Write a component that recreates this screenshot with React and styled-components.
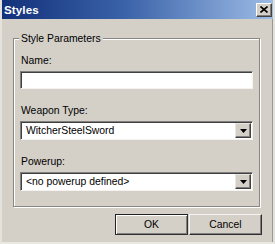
import React from "react";
import styled, { createGlobalStyle } from "styled-components";

const Global = createGlobalStyle`
  html, body { margin: 0; padding: 0; background: #d4d0c8; }
  body { font-family: "Liberation Sans", Arial, sans-serif; }
`;

const Window = styled.div`
  width: 275px;
  height: 244px;
  box-sizing: border-box;
  background: #d4d0c8;
  display: flex;
  flex-direction: column;
  border-left: 2px solid #e4e2dc;
  border-right: 2px solid #e4e2dc;
  border-bottom: 2px solid #eae8e3;
  overflow: hidden;
  font-size: 10.4px;
  color: #000;
`;

const TitleBar = styled.div`
  height: 19px;
  margin: 0 -2px;
  flex: none;
  display: flex;
  align-items: center;
  justify-content: space-between;
  padding: 0 3px 0 4px;
  background: linear-gradient(to right, #12307a 0%, #3a62a8 45%, #9ebde6 100%);
`;

const Title = styled.span`
  color: #fff;
  font-weight: bold;
  font-size: 11.6px;
  letter-spacing: 0.1px;
`;

const CloseBtn = styled.div`
  width: 16px;
  height: 14px;
  box-sizing: border-box;
  background: #d4d0c8;
  border-top: 1px solid #fff;
  border-left: 1px solid #fff;
  border-right: 1px solid #404040;
  border-bottom: 1px solid #404040;
  box-shadow: inset -1px -1px 0 #808080;
  display: flex;
  align-items: center;
  justify-content: center;
`;

const Body = styled.div`
  flex: 1;
  display: flex;
  flex-direction: column;
  padding: 19px 12px 0 11px;
  border-right: 1px solid #9a9893;
`;

const Group = styled.div`
  position: relative;
  border: 1px solid #8a8782;
  box-shadow: inset 1px 1px 0 #fff, 1px 1px 0 #fff;
  padding: 15px 6px 15px 6px;
  display: flex;
  flex-direction: column;
  gap: 15px;
`;

const Legend = styled.span`
  position: absolute;
  top: -7px;
  left: 5px;
  padding: 0 2px;
  line-height: 13px;
  background: #d4d0c8;
`;

const Field = styled.div`
  display: flex;
  flex-direction: column;
`;

const Label = styled.div`
  line-height: 13px;
  margin-bottom: 4px;
  padding-left: 1px;
`;

const Sunken = styled.div`
  height: ${(p) => p.$h}px;
  box-sizing: border-box;
  background: #fff;
  border-top: 1px solid #808080;
  border-left: 1px solid #808080;
  border-right: 1px solid #f4f3f0;
  border-bottom: 1px solid #f4f3f0;
  box-shadow: inset 1px 1px 0 #404040;
  display: flex;
  align-items: center;
  justify-content: space-between;
  padding: 1px 1px 1px 5px;
`;

const Value = styled.span`
  line-height: 13px;
`;

const ArrowBtn = styled.div`
  width: 16px;
  height: 15px;
  box-sizing: border-box;
  background: #d4d0c8;
  border-top: 1px solid #e8e6e1;
  border-left: 1px solid #e8e6e1;
  border-right: 1px solid #404040;
  border-bottom: 1px solid #404040;
  box-shadow: inset -1px -1px 0 #808080;
  display: flex;
  align-items: center;
  justify-content: center;
`;

const ButtonRow = styled.div`
  display: flex;
  justify-content: flex-end;
  gap: 1px;
  padding-top: 7px;
  margin-right: -2px;
`;

const Button = styled.div`
  width: 73px;
  height: 21px;
  box-sizing: border-box;
  display: flex;
  align-items: center;
  justify-content: center;
  background: #d4d0c8;
  font-size: 10.4px;
  border: 1px solid ${(p) => (p.$default ? "#202020" : "#f4f3f0")};
  border-right-color: #303030;
  border-bottom-color: #303030;
  box-shadow: ${(p) =>
    p.$default
      ? "inset 1px 1px 0 #fff, inset -1px -1px 0 #808080"
      : "inset -1px -1px 0 #808080"};
`;

const Arrow = () => (
  <svg width="7" height="4" viewBox="0 0 7 4">
    <path d="M0 0h7L3.5 4z" fill="#000" />
  </svg>
);

const Combo = ({ value }) => (
  <Sunken $h={19}>
    <Value>{value}</Value>
    <ArrowBtn>
      <Arrow />
    </ArrowBtn>
  </Sunken>
);

export default function App() {
  return (
    <>
      <Global />
      <Window>
        <TitleBar>
          <Title>Styles</Title>
          <CloseBtn>
            <svg width="8" height="7" viewBox="0 0 8 7">
              <path d="M0.5 0.5L7.5 6.5M7.5 0.5L0.5 6.5" stroke="#000" strokeWidth="1.6" />
            </svg>
          </CloseBtn>
        </TitleBar>
        <Body>
          <Group>
            <Legend>Style Parameters</Legend>
            <Field>
              <Label>Name:</Label>
              <Sunken $h={18} />
            </Field>
            <Field>
              <Label>Weapon Type:</Label>
              <Combo value="WitcherSteelSword" />
            </Field>
            <Field>
              <Label>Powerup:</Label>
              <Combo value="<no powerup defined>" />
            </Field>
          </Group>
          <ButtonRow>
            <Button $default>OK</Button>
            <Button>Cancel</Button>
          </ButtonRow>
        </Body>
      </Window>
    </>
  );
}
